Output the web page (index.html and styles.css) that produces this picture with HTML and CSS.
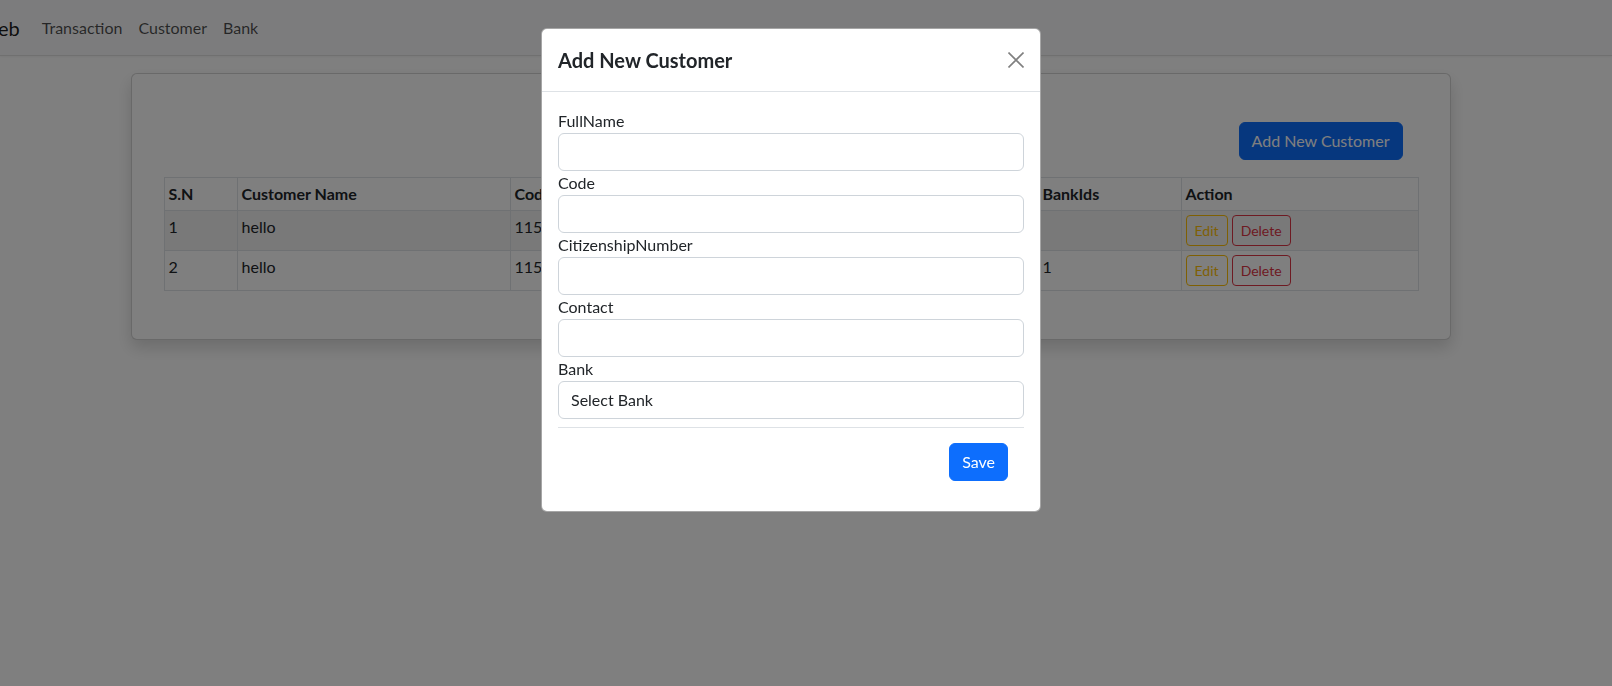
FILE: index.html
```html
<!DOCTYPE html>
<html lang="en">
<head>
<meta charset="utf-8">
<title>Customer</title>
<link rel="stylesheet" href="styles.css">
</head>
<body>
<nav class="navbar">
  <span class="brand">eb</span>
  <a class="nav-link" href="#">Transaction</a>
  <a class="nav-link" href="#">Customer</a>
  <a class="nav-link" href="#">Bank</a>
</nav>
<div class="page">
  <main class="container">
    <div class="card">
      <div class="toolbar">
        <button class="btn btn-primary">Add New Customer</button>
      </div>
      <table class="table">
        <thead>
          <tr>
            <th class="c-sn">S.N</th>
            <th class="c-name">Customer Name</th>
            <th class="c-code">Code</th>
            <th class="c-cit">CitizenshipNumber</th>
            <th class="c-contact">Contact</th>
            <th class="c-bank">BankIds</th>
            <th class="c-action">Action</th>
          </tr>
        </thead>
        <tbody>
          <tr class="odd">
            <td>1</td>
            <td>hello</td>
            <td>1154</td>
            <td>12345</td>
            <td>9800000000</td>
            <td></td>
            <td><button class="btn-sm btn-edit">Edit</button> <button class="btn-sm btn-delete">Delete</button></td>
          </tr>
          <tr>
            <td>2</td>
            <td>hello</td>
            <td>1154</td>
            <td>12345</td>
            <td>9800000000</td>
            <td>1</td>
            <td><button class="btn-sm btn-edit">Edit</button> <button class="btn-sm btn-delete">Delete</button></td>
          </tr>
        </tbody>
      </table>
    </div>
  </main>
</div>
<div class="backdrop"></div>
<div class="modal-wrap">
  <div class="modal">
    <div class="modal-header">
      <h5 class="modal-title">Add New Customer</h5>
      <button class="btn-close" aria-label="Close">
        <svg width="16" height="16" viewBox="0 0 16 16"><path d="M0.5 0.5 L15.5 15.5 M15.5 0.5 L0.5 15.5" stroke="#808080" stroke-width="1.6" fill="none"/></svg>
      </button>
    </div>
    <div class="modal-body">
      <div class="field">
        <label>FullName</label>
        <input class="form-control" type="text">
      </div>
      <div class="field">
        <label>Code</label>
        <input class="form-control" type="text">
      </div>
      <div class="field">
        <label>CitizenshipNumber</label>
        <input class="form-control" type="text">
      </div>
      <div class="field">
        <label>Contact</label>
        <input class="form-control" type="text">
      </div>
      <div class="field">
        <label>Bank</label>
        <div class="form-control select">Select Bank</div>
      </div>
      <hr class="divider">
      <div class="footer">
        <button class="btn btn-save">Save</button>
      </div>
    </div>
  </div>
</div>
</body>
</html>
```

FILE: styles.css
```css
* { box-sizing: border-box; }
html, body { margin: 0; padding: 0; }
body {
  font-family: Lato, "Open Sans", sans-serif;
  font-size: 16px;
  line-height: 24px;
  color: #212529;
  background: #fff;
  width: 1612px;
  height: 686px;
  overflow: hidden;
}
.navbar {
  display: flex;
  align-items: center;
  height: 56px;
  padding: 8px 0;
  background: #f8f9fa;
  border-bottom: 1px solid #e0e0e0;
  box-shadow: 0 1px 2px rgba(0,0,0,0.05);
}
.brand {
  font-size: 20px;
  line-height: 30px;
  color: rgba(0,0,0,0.9);
  margin-left: -2px;
  margin-right: 14px;
  white-space: nowrap;
}
.nav-link {
  padding: 8px;
  color: rgba(0,0,0,0.7);
  text-decoration: none;
}
.page { width: 1581px; }
.container {
  width: 1320px;
  margin: 17px auto 0;
}
.card {
  background: #fff;
  border: 1px solid rgba(0,0,0,0.175);
  border-radius: 6px;
  box-shadow: 0 8px 16px rgba(0,0,0,0.15);
  padding: 48px 31px 48px 32px;
}
.toolbar {
  display: flex;
  justify-content: flex-end;
  padding-right: 16px;
  margin-bottom: 17px;
}
.btn {
  font-family: inherit;
  font-size: 16px;
  line-height: 24px;
  padding: 6px 12px;
  border: 1px solid transparent;
  border-radius: 6px;
  cursor: pointer;
}
.btn-primary, .btn-save {
  background: #0d6efd;
  border-color: #0d6efd;
  color: #fff;
}
.table {
  width: 100%;
  border-collapse: collapse;
  table-layout: fixed;
}
.table th, .table td {
  border: 1px solid #dee2e6;
  padding: 4px;
  text-align: left;
  vertical-align: top;
}
.table th { font-weight: 700; }
.table td { height: 40px; }
.table tr.odd td { background: rgba(0,0,0,0.05); }
.c-sn { width: 73px; }
.c-name { width: 273px; }
.c-code { width: 176px; }
.c-cit { width: 176px; }
.c-contact { width: 176px; }
.c-bank { width: 143px; }
.btn-sm {
  font-family: inherit;
  font-size: 14px;
  line-height: 21px;
  padding: 4px 8px;
  background: transparent;
  border-radius: 4px;
  cursor: pointer;
}
.btn-edit { border: 1px solid #ffc107; color: #ffc107; }
.btn-delete { border: 1px solid #dc3545; color: #dc3545; }
.backdrop {
  position: fixed;
  inset: 0;
  background: rgba(0,0,0,0.5);
}
.modal-wrap {
  position: fixed;
  top: 0;
  left: 0;
  width: 1582px;
  height: 100%;
  display: flex;
  justify-content: center;
  align-items: flex-start;
  padding-top: 28px;
}
.modal {
  width: 500px;
  background: #fff;
  border: 1px solid rgba(0,0,0,0.35);
  border-radius: 6px;
}
.modal-header {
  display: flex;
  align-items: center;
  justify-content: space-between;
  height: 63px;
  padding: 0 16px;
  border-bottom: 1px solid #dee2e6;
}
.modal-title {
  margin: 0;
  font-size: 20px;
  line-height: 30px;
  font-weight: 700;
  color: #212529;
}
.btn-close {
  border: 0;
  background: transparent;
  padding: 0;
  width: 16px;
  height: 16px;
  display: flex;
  cursor: pointer;
}
.modal-body {
  padding: 17px 16px 14px;
}
.field label {
  display: block;
  line-height: 24px;
}
.form-control {
  display: block;
  width: 100%;
  height: 38px;
  padding: 6px 12px;
  font-family: inherit;
  font-size: 16px;
  line-height: 24px;
  color: #212529;
  background: #fff;
  border: 1px solid #ced4da;
  border-radius: 6px;
}
.divider {
  margin: 8px 0 0;
  border: 0;
  border-top: 1px solid #dee2e6;
}
.footer {
  display: flex;
  justify-content: flex-end;
  padding: 15px 16px 16px;
}
```
